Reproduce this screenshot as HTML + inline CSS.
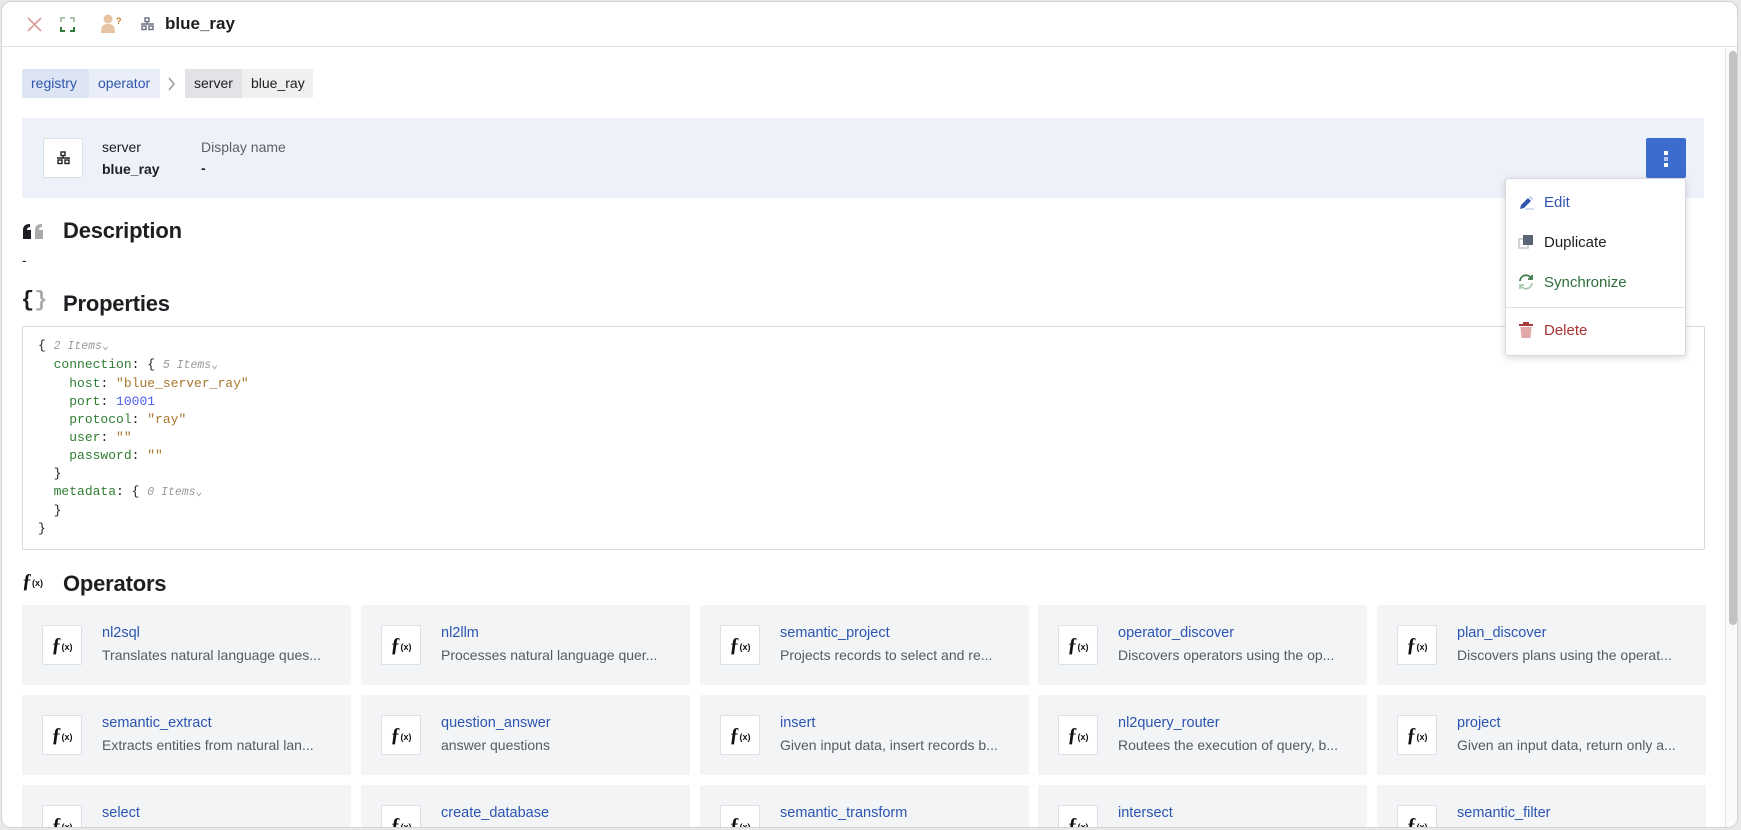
<!DOCTYPE html>
<html><head><meta charset="utf-8">
<style>
*{box-sizing:border-box;margin:0;padding:0}
body{width:1741px;height:830px;overflow:hidden;background:#e9e9ea;font-family:"Liberation Sans",sans-serif;color:#1c1e21;position:relative}
.win{position:absolute;left:1px;top:1px;width:1737px;height:827px;background:#fff;border:1px solid #d4d4d6;border-radius:10px;overflow:hidden}
.a{position:absolute}
.hdr{position:absolute;left:0;top:0;width:100%;height:45px;border-bottom:1px solid #dedfe1}
.bc{position:absolute;top:67px;height:29px;line-height:29px;font-size:14px;padding:0 9px}
.panel{position:absolute;left:20px;top:116px;width:1682px;height:80px;background:#edf1f9;border-radius:2px}
.ibox{position:absolute;background:#fff;border:1px solid #dcdfe4;border-radius:2px}
h2{position:absolute;font-size:22px;font-weight:bold;left:61px;letter-spacing:-0.2px}
.json{position:absolute;left:20px;top:324px;width:1683px;height:224px;border:1px solid #d9dadc;border-radius:2px;font-family:"Liberation Mono",monospace;font-size:13px;line-height:18px;padding:10px 0 0 15px;white-space:pre;color:#222}
.k{color:#2f7d32}.s{color:#a8772c}.n{color:#4a5cf0}.c{color:#999;font-style:italic;font-size:11.5px}
.card{position:absolute;width:329px;height:80px;background:#f3f4f6;border-radius:2px}
.card .ibox{left:20px;top:20px;width:40px;height:40px;text-align:center;line-height:38px}
.card .t{position:absolute;left:80px;top:20px;font-size:14.5px;color:#2b55b0;white-space:nowrap}
.card .d{position:absolute;left:80px;top:42px;font-size:14px;color:#555b63;white-space:nowrap}
.fx{font-family:"Liberation Serif",serif;font-size:20px;font-weight:bold;color:#111}
.fx small{font-family:"Liberation Sans",sans-serif;font-size:9px;font-weight:bold;vertical-align:1px}
.menu{position:absolute;left:1503px;top:176px;width:181px;height:178px;background:#fff;border:1px solid #d8d9dc;border-radius:3px;box-shadow:0 2px 8px rgba(0,0,0,.15)}
.mi{position:absolute;left:38px;font-size:15px}
.sb{position:absolute;left:1723px;top:46px;width:14px;height:782px;border-left:1px solid #e3e3e3;background:#fafafa}
.sb div{position:absolute;left:3px;top:3px;width:8px;height:574px;background:#c2c2c2;border-radius:4px}
</style></head><body>
<div class="win">
<div class="hdr">
 <svg class="a" style="left:24px;top:14px" width="17" height="17" viewBox="0 0 17 17"><path d="M2 2L15 15M15 2L2 15" stroke="#dba2a0" stroke-width="1.8"/></svg>
 <svg class="a" style="left:58px;top:15px" width="15" height="15" viewBox="0 0 15 15" fill="none" stroke-width="2"><path d="M1 5V1H5M10 1H14V5" stroke="#a9c4ad"/><path d="M1 10V14H5M10 14H14V10" stroke="#2f7a3a"/></svg>
 <svg class="a" style="left:97px;top:12px" width="24" height="20" viewBox="0 0 24 20"><circle cx="9" cy="5" r="4.5" fill="#e7c5a4"/><path d="M2 19C2 12 4 10 9 10S16 12 16 19Z" fill="#e7c5a4"/><text x="17" y="10" font-size="9" font-weight="bold" fill="#c47724" font-family="Liberation Sans">?</text></svg>
 <svg class="a" style="left:138px;top:15px" width="15" height="14" viewBox="0 0 15 14" fill="none" stroke="#6a7080" stroke-width="1.4"><rect x="5" y="1" width="4" height="3.5"/><path d="M1 7H14M7 4.5V7"/><rect x="2" y="9" width="4" height="3.5"/><rect x="9" y="9" width="4" height="3.5"/></svg>
 <div class="a" style="left:163px;top:12px;font-size:17px;font-weight:bold">blue_ray</div>
</div>
<div class="bc" style="left:20px;background:#dde5f5;color:#2f55ad;width:67px">registry</div>
<div class="bc" style="left:87px;background:#e9eef8;color:#2f55ad;width:71px">operator</div>
<svg class="a" style="left:165px;top:75px" width="9" height="14" viewBox="0 0 9 14"><path d="M2 1L7 7L2 13" stroke="#999" stroke-width="1.5" fill="none"/></svg>
<div class="bc" style="left:183px;background:#e2e3e6;width:57px">server</div>
<div class="bc" style="left:240px;background:#f0f0f1;width:71px">blue_ray</div>

<div class="panel"></div>
<div class="ibox" style="left:41px;top:136px;width:40px;height:40px"><svg class="a" style="left:12px;top:12px" width="15" height="14" viewBox="0 0 15 14" fill="none" stroke="#222" stroke-width="1.4"><rect x="5" y="1" width="4" height="3.5"/><path d="M1 7H14M7 4.5V7"/><rect x="2" y="9" width="4" height="3.5"/><rect x="9" y="9" width="4" height="3.5"/></svg></div>
<div class="a" style="left:100px;top:137px;font-size:14px">server</div>
<div class="a" style="left:100px;top:159px;font-size:14px;font-weight:bold">blue_ray</div>
<div class="a" style="left:199px;top:137px;font-size:14px;color:#5c6068">Display name</div>
<div class="a" style="left:199px;top:158px;font-size:14px;font-weight:bold">-</div>
<div class="a" style="left:1644px;top:136px;width:40px;height:40px;background:#3d6ccf;border-radius:2px"><div class="a" style="left:18px;top:13px;width:4px;height:4px;background:#fff"></div><div class="a" style="left:18px;top:19px;width:4px;height:4px;background:#b5c6ee"></div><div class="a" style="left:18px;top:25px;width:4px;height:4px;background:#fff"></div></div>

<svg class="a" style="left:20px;top:221px" width="24" height="17" viewBox="0 0 24 17"><path d="M1 16V7Q1 1 8 1V4Q5 4 5 7H9V16Z" fill="#1c1e21"/><path d="M13 16V7Q13 1 20 1V4Q17 4 17 7H21V16Z" fill="#aaa"/></svg>
<h2 style="top:216px">Description</h2>
<div class="a" style="left:20px;top:250px;font-size:14px">-</div>
<div class="a" style="left:19px;top:286px;font-size:22px;font-weight:bold;font-family:'Liberation Mono',monospace">{<span style="color:#aaa">}</span></div>
<h2 style="top:289px">Properties</h2>

<div class="json">{ <span class="c">2 Items⌄</span>
  <span class="k">connection</span>: { <span class="c">5 Items⌄</span>
    <span class="k">host</span>: <span class="s">"blue_server_ray"</span>
    <span class="k">port</span>: <span class="n">10001</span>
    <span class="k">protocol</span>: <span class="s">"ray"</span>
    <span class="k">user</span>: <span class="s">""</span>
    <span class="k">password</span>: <span class="s">""</span>
  }
  <span class="k">metadata</span>: { <span class="c">0 Items⌄</span>
  }
}</div>

<div class="a fx" style="left:20px;top:568px">ƒ<small>(x)</small></div>
<h2 style="top:569px">Operators</h2>

<div class="card" style="left:20px;top:603px"><div class="ibox fx">ƒ<small>(x)</small></div><div class="t">nl2sql</div><div class="d">Translates natural language ques...</div></div>
<div class="card" style="left:359px;top:603px"><div class="ibox fx">ƒ<small>(x)</small></div><div class="t">nl2llm</div><div class="d">Processes natural language quer...</div></div>
<div class="card" style="left:698px;top:603px"><div class="ibox fx">ƒ<small>(x)</small></div><div class="t">semantic_project</div><div class="d">Projects records to select and re...</div></div>
<div class="card" style="left:1036px;top:603px"><div class="ibox fx">ƒ<small>(x)</small></div><div class="t">operator_discover</div><div class="d">Discovers operators using the op...</div></div>
<div class="card" style="left:1375px;top:603px"><div class="ibox fx">ƒ<small>(x)</small></div><div class="t">plan_discover</div><div class="d">Discovers plans using the operat...</div></div>

<div class="card" style="left:20px;top:693px"><div class="ibox fx">ƒ<small>(x)</small></div><div class="t">semantic_extract</div><div class="d">Extracts entities from natural lan...</div></div>
<div class="card" style="left:359px;top:693px"><div class="ibox fx">ƒ<small>(x)</small></div><div class="t">question_answer</div><div class="d">answer questions</div></div>
<div class="card" style="left:698px;top:693px"><div class="ibox fx">ƒ<small>(x)</small></div><div class="t">insert</div><div class="d">Given input data, insert records b...</div></div>
<div class="card" style="left:1036px;top:693px"><div class="ibox fx">ƒ<small>(x)</small></div><div class="t">nl2query_router</div><div class="d">Routees the execution of query, b...</div></div>
<div class="card" style="left:1375px;top:693px"><div class="ibox fx">ƒ<small>(x)</small></div><div class="t">project</div><div class="d">Given an input data, return only a...</div></div>

<div class="card" style="left:20px;top:783px"><div class="ibox fx">ƒ<small>(x)</small></div><div class="t">select</div><div class="d">Given an input data, filter the rec...</div></div>
<div class="card" style="left:359px;top:783px"><div class="ibox fx">ƒ<small>(x)</small></div><div class="t">create_database</div><div class="d">Creates a database in the registry...</div></div>
<div class="card" style="left:698px;top:783px"><div class="ibox fx">ƒ<small>(x)</small></div><div class="t">semantic_transform</div><div class="d">Transforms records by mapping fi...</div></div>
<div class="card" style="left:1036px;top:783px"><div class="ibox fx">ƒ<small>(x)</small></div><div class="t">intersect</div><div class="d">Given multiple inputs, return...</div></div>
<div class="card" style="left:1375px;top:783px"><div class="ibox fx">ƒ<small>(x)</small></div><div class="t">semantic_filter</div><div class="d">Filters records based on natural...</div></div>

<div class="menu">
 <svg class="a" style="left:13px;top:17px" width="16" height="14" viewBox="0 0 16 14"><path d="M1 13L2 9L9 2L12 5L5 12Z" fill="#2f55ad"/><path d="M10 1L11 0L14 3L13 4Z" fill="#aebde0"/><path d="M6 13H15" stroke="#aebde0"/></svg>
 <div class="mi" style="top:15px;color:#2f55ad">Edit</div>
 <svg class="a" style="left:12px;top:55px" width="16" height="16" viewBox="0 0 16 16"><rect x="1" y="5" width="9" height="9" fill="none" stroke="#c3c6cc" stroke-width="1.5"/><rect x="5" y="1" width="10" height="10" fill="#5c6478"/></svg>
 <div class="mi" style="top:55px">Duplicate</div>
 <svg class="a" style="left:12px;top:95px" width="16" height="16" viewBox="0 0 16 16" fill="none" stroke-width="1.8"><path d="M2 7A6 6 0 0 1 13 4" stroke="#3a7a48"/><path d="M14 1V5H10" stroke="#3a7a48"/><path d="M14 9A6 6 0 0 1 3 12" stroke="#a8c9b0"/><path d="M2 15V11H6" stroke="#a8c9b0"/></svg>
 <div class="mi" style="top:95px;color:#2f6e3c">Synchronize</div>
 <div class="a" style="left:0;top:128px;width:100%;height:1px;background:#dedfe1"></div>
 <svg class="a" style="left:13px;top:143px" width="14" height="16" viewBox="0 0 14 16"><rect x="0" y="2" width="14" height="2" fill="#a83a3a"/><rect x="4" y="0" width="6" height="2" fill="#a83a3a"/><path d="M1.5 5H12.5L11.5 16H2.5Z" fill="#e2a8a8"/></svg>
 <div class="mi" style="top:143px;color:#a83232">Delete</div>
</div>
<div class="sb"><div></div></div>
</div>
</body></html>
